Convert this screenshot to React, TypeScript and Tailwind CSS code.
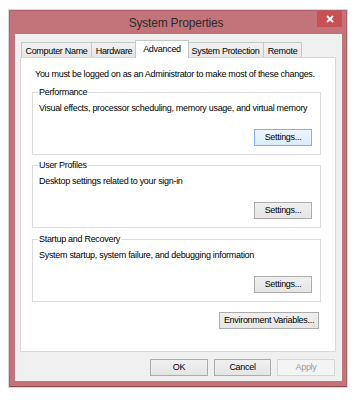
import React from "react";

type BtnProps = {
  children: React.ReactNode;
  className?: string;
  focused?: boolean;
  disabled?: boolean;
};

const Btn = ({ children, className, focused, disabled }: BtnProps) => {
  let look = "border-[#acacac] bg-gradient-to-b from-[#f0f0f0] to-[#e5e5e5] text-black";
  if (focused) look = "border-[#7eb4ea] bg-gradient-to-b from-[#ecf4fc] to-[#dcecfc] text-black";
  if (disabled) look = "border-[#d5d5d5] bg-[#f4f4f4] text-[#9a9a9a]";
  return (
    <div
      className={`h-[17px] flex items-center justify-center border ${look} ${className ?? ""}`}
    >
      {children}
    </div>
  );
};

type GroupProps = {
  title: string;
  desc: string;
  className?: string;
  focused?: boolean;
};

const Group = ({ title, desc, className, focused }: GroupProps) => {
  return (
    <div className={`w-[289px] h-[63px] border border-[#dcdcdc] flex flex-col ${className ?? ""}`}>
      <span className="-mt-[7px] ml-[5px] px-px bg-white w-fit leading-[12px]">{title}</span>
      <span className="mt-[4px] ml-[6px] leading-[12px]">{desc}</span>
      <div className="flex justify-end pr-[8px] mt-[15px]">
        <Btn className="w-[58px]" focused={focused}>Settings...</Btn>
      </div>
    </div>
  );
};

const tabs = [
  { name: "Computer Name", w: "w-[71px]", ml: "" },
  { name: "Hardware", w: "w-[46px]", ml: "-ml-px" },
  { name: "Advanced", w: "w-[54px]", ml: "-ml-[2px]", active: true },
  { name: "System Protection", w: "w-[77px]", ml: "-ml-[2px]" },
  { name: "Remote", w: "w-[39px]", ml: "-ml-px" },
];

export default function App() {
  return (
    <div className="w-[357px] h-[400px] bg-white pt-[10px] pl-[9px] font-['Liberation_Sans',Arial,sans-serif] text-[9px] tracking-[-0.3px] text-black">
      <div className="w-[338px] h-[377px] bg-[#c3737a] border border-[#b0626a] border-b-[#8f4650] flex flex-col shadow-[0_0_0_1px_#d8d8d8]">
        {/* title bar */}
        <div className="h-[23px] grid grid-cols-[1fr_auto_1fr] pr-[4px]">
          <div />
          <div className="text-[12px] tracking-[-0.2px] text-[#2b2b2b] leading-[23px] pt-px">
            System Properties
          </div>
          <div className="flex justify-end items-start">
            <div className="w-[25px] h-[16px] bg-[#c75050] flex items-center justify-center">
              <svg width="8" height="8" viewBox="0 0 8 8">
                <path d="M1 1L7 7M7 1L1 7" stroke="white" strokeWidth="1.8" />
              </svg>
            </div>
          </div>
        </div>

        {/* client area */}
        <div className="ml-[5px] mr-[4px] mb-[5px] flex-1 bg-[#f0f0f0] flex flex-col px-[5px] pt-[6px]">
          {/* tabs */}
          <div className="h-[17px] flex items-end pl-px">
            {tabs.map((t) =>
              t.active ? (
                <div
                  key={t.name}
                  className={`${t.w} ${t.ml} h-[18px] -mb-px relative z-10 bg-white border border-b-0 border-[#c6c6c6] flex items-start justify-center pt-[2px] leading-[12px]`}
                >
                  {t.name}
                </div>
              ) : (
                <div
                  key={t.name}
                  className={`${t.w} ${t.ml} h-[15px] border border-b-0 border-[#c6c6c6] bg-gradient-to-b from-[#f2f2f2] to-[#e6e6e6] flex items-center justify-center leading-[12px] pt-px`}
                >
                  {t.name}
                </div>
              )
            )}
          </div>

          {/* panel */}
          <div className="w-[316px] h-[295px] bg-white border border-[#d9d9d9] flex flex-col">
            <span className="mt-[10px] ml-[14px] leading-[12px]">
              You must be logged on as an Administrator to make most of these changes.
            </span>
            <div className="ml-[11px] flex flex-col">
              <Group
                className="mt-[12px]"
                title="Performance"
                desc="Visual effects, processor scheduling, memory usage, and virtual memory"
                focused
              />
              <Group
                className="mt-[10px]"
                title="User Profiles"
                desc="Desktop settings related to your sign-in"
              />
              <Group
                className="mt-[11px]"
                title="Startup and Recovery"
                desc="System startup, system failure, and debugging information"
              />
              <div className="w-[289px] flex justify-end pr-[2px] mt-[10px]">
                <Btn className="w-[100px]">Environment Variables...</Btn>
              </div>
            </div>
          </div>

          {/* dialog buttons */}
          <div className="flex justify-end gap-[6px] mt-[7px] mr-[2px]">
            <Btn className="w-[58px]">OK</Btn>
            <Btn className="w-[57px]">Cancel</Btn>
            <Btn className="w-[58px]" disabled>Apply</Btn>
          </div>
        </div>
      </div>
    </div>
  );
}
